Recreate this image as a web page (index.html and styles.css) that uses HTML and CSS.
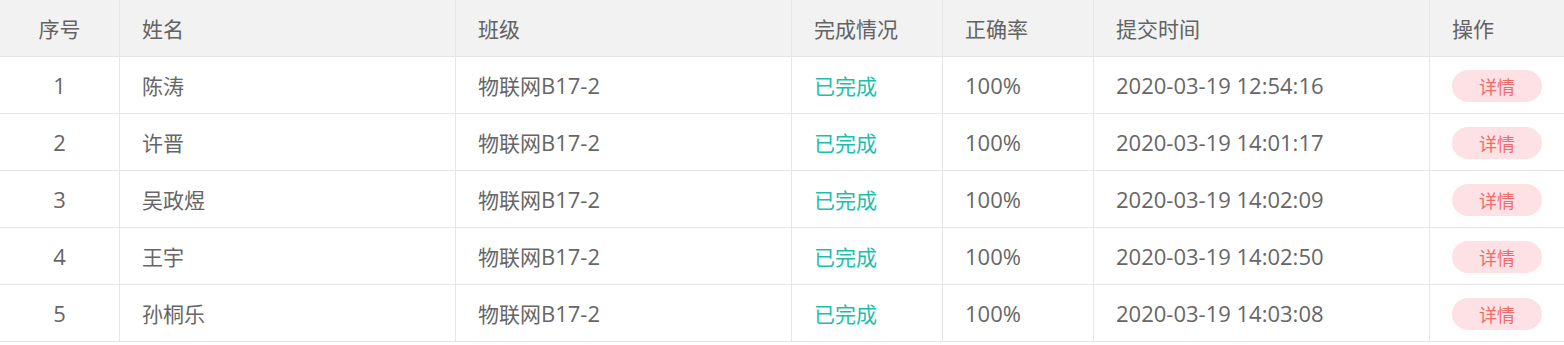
FILE: index.html
```html
<!DOCTYPE html>
<html lang="zh-CN">
<head>
<meta charset="utf-8">
<title>提交记录</title>
<link rel="stylesheet" href="styles.css">
</head>
<body>
<table class="records">
  <colgroup>
    <col class="c-idx">
    <col class="c-name">
    <col class="c-class">
    <col class="c-status">
    <col class="c-rate">
    <col class="c-time">
    <col class="c-op">
  </colgroup>
  <thead>
    <tr>
      <th class="center">序号</th>
      <th>姓名</th>
      <th>班级</th>
      <th>完成情况</th>
      <th>正确率</th>
      <th>提交时间</th>
      <th>操作</th>
    </tr>
  </thead>
  <tbody>
    <tr>
      <td class="center num">1</td>
      <td>陈涛</td>
      <td>物联网<span class="latin">B17-2</span></td>
      <td class="done">已完成</td>
      <td class="num">100%</td>
      <td class="num">2020-03-19 12:54:16</td>
      <td><button class="detail">详情</button></td>
    </tr>
    <tr>
      <td class="center num">2</td>
      <td>许晋</td>
      <td>物联网<span class="latin">B17-2</span></td>
      <td class="done">已完成</td>
      <td class="num">100%</td>
      <td class="num">2020-03-19 14:01:17</td>
      <td><button class="detail">详情</button></td>
    </tr>
    <tr>
      <td class="center num">3</td>
      <td>吴政煜</td>
      <td>物联网<span class="latin">B17-2</span></td>
      <td class="done">已完成</td>
      <td class="num">100%</td>
      <td class="num">2020-03-19 14:02:09</td>
      <td><button class="detail">详情</button></td>
    </tr>
    <tr>
      <td class="center num">4</td>
      <td>王宇</td>
      <td>物联网<span class="latin">B17-2</span></td>
      <td class="done">已完成</td>
      <td class="num">100%</td>
      <td class="num">2020-03-19 14:02:50</td>
      <td><button class="detail">详情</button></td>
    </tr>
    <tr>
      <td class="center num">5</td>
      <td>孙桐乐</td>
      <td>物联网<span class="latin">B17-2</span></td>
      <td class="done">已完成</td>
      <td class="num">100%</td>
      <td class="num">2020-03-19 14:03:08</td>
      <td><button class="detail">详情</button></td>
    </tr>
  </tbody>
</table>
</body>
</html>
```
FILE: styles.css
```css
html, body {
  margin: 0;
  padding: 0;
  background: #ffffff;
}

body {
  font-family: "Open Sans", "Noto Sans CJK SC", sans-serif;
  font-size: 21px;
  color: #666666;
}

.records {
  width: 1564px;
  table-layout: fixed;
  border-collapse: separate;
  border-spacing: 0;
}

.c-idx { width: 120px; }
.c-name { width: 336px; }
.c-class { width: 336px; }
.c-status { width: 151px; }
.c-rate { width: 151px; }
.c-time { width: 336px; }
.c-op { width: 134px; }

.records th,
.records td {
  box-sizing: border-box;
  height: 57px;
  padding: 0 0 0 22px;
  text-align: left;
  font-weight: normal;
  white-space: nowrap;
  border-right: 1px solid #e6e6e6;
  border-bottom: 1px solid #e6e6e6;
  vertical-align: middle;
}

.records th:last-child,
.records td:last-child {
  border-right: none;
  padding-left: 22px;
}

.records thead th {
  background: #f2f2f2;
  color: #636363;
}

.records .center {
  text-align: center;
  padding-left: 0;
}

.records .num,
.latin {
  font-size: 22px;
}

.done {
  color: #1bbfae;
}

.detail {
  display: block;
  width: 90px;
  height: 32px;
  margin-top: 1px;
  border: none;
  border-radius: 16px;
  background: #fde1e4;
  color: #f26b6b;
  font-family: "Noto Sans CJK SC", sans-serif;
  font-size: 18px;
  padding: 0;
  cursor: pointer;
}
```
